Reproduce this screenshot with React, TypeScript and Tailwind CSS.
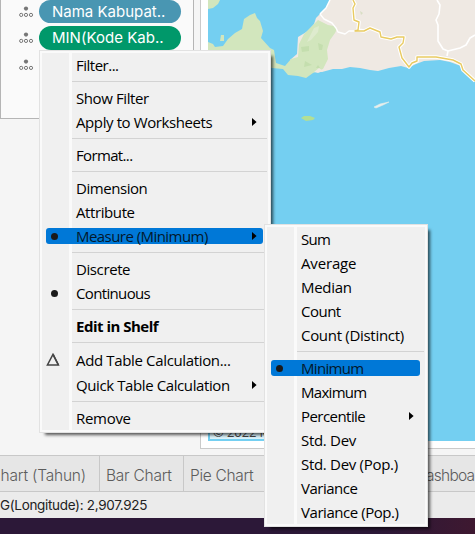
import React from "react";

type Entry = {
  label?: string;
  track?: string;
  bold?: boolean;
  dot?: boolean;
  delta?: boolean;
  arrow?: boolean;
  active?: boolean;
  tall?: boolean;
};

const fieldMenu: Entry[] = [
  { label: "Filter...", track: "tracking-[-0.5px]" },
  {},
  { label: "Show Filter", track: "tracking-[-0.4px]" },
  { label: "Apply to Worksheets", track: "tracking-[-0.4px]", arrow: true },
  {},
  { label: "Format...", track: "tracking-[-0.65px]" },
  {},
  { label: "Dimension", track: "tracking-[-0.45px]" },
  { label: "Attribute", track: "tracking-[-0.4px]" },
  { label: "Measure (Minimum)", track: "tracking-[-0.55px]", dot: true, arrow: true, active: true },
  {},
  { label: "Discrete", track: "tracking-[-0.4px]" },
  { label: "Continuous", track: "tracking-[-0.65px]", dot: true },
  {},
  { label: "Edit in Shelf", track: "tracking-[-0.5px]", bold: true },
  {},
  { label: "Add Table Calculation...", track: "tracking-[-0.35px]", delta: true, tall: true },
  { label: "Quick Table Calculation", track: "tracking-[-0.4px]", arrow: true, tall: true },
  {},
  { label: "Remove" },
];

const measureMenu: Entry[] = [
  { label: "Sum", track: "tracking-[-0.7px]" },
  { label: "Average", track: "tracking-[-0.15px]" },
  { label: "Median" },
  { label: "Count", track: "tracking-[-0.5px]" },
  { label: "Count (Distinct)" },
  {},
  { label: "Minimum", track: "tracking-[-0.7px]", dot: true, active: true },
  { label: "Maximum", track: "tracking-[-0.7px]" },
  { label: "Percentile", track: "tracking-[-0.55px]", arrow: true },
  { label: "Std. Dev" },
  { label: "Std. Dev (Pop.)" },
  { label: "Variance", track: "tracking-[-0.5px]" },
  { label: "Variance (Pop.)", track: "tracking-[-0.45px]" },
];

function Row({ item }: { item: Entry }) {
  if (!item.label) {
    return (
      <div className="flex h-[9px] items-start pt-[3px] pl-[30px] pr-[1px]">
        <div className="h-px w-full bg-[#d3d3d3]" />
      </div>
    );
  }
  return (
    <div className={`relative flex items-center ${item.tall ? "h-[25px]" : "h-6"}`}>
      {item.active && (
        <div className="absolute left-1 right-[5px] top-[3px] h-4 rounded-[3px] bg-[#0078d7]" />
      )}
      <div className="relative flex w-[34px] shrink-0 items-center pb-[2px]">
        {item.dot && <span className="ml-[8.5px] size-[7px] rounded-full bg-[#1a1a1a]" />}
        {item.delta && (
          <svg className="ml-[4px]" width="14" height="13" viewBox="0 0 14 13">
            <path d="M7 1.3 L12.4 12 H1.4 Z" fill="none" stroke="#444" strokeWidth="1.5" />
            <path d="M7.2 1.6 L12.4 12" stroke="#444" strokeWidth="1.6" />
          </svg>
        )}
      </div>
      <span
        className={`relative whitespace-nowrap pb-[2px] text-[15px] leading-[22px] ${
          item.track ?? "tracking-[-0.3px]"
        } ${item.bold ? "font-bold" : "font-normal"} ${item.active ? "text-[#03182c]" : "text-black"}`}
      >
        {item.label}
      </span>
      {item.arrow && (
        <svg className="relative mb-[2px] ml-auto mr-[11px]" width="5" height="8" viewBox="0 0 5 8">
          <path d="M0 0 L4.6 4 L0 8 Z" fill="#000" />
        </svg>
      )}
    </div>
  );
}

function Menu({ items, place }: { items: Entry[]; place: string }) {
  return (
    <div
      className={`absolute border border-[#e2e2e2] bg-[#fafafa] p-[2px] shadow-[4px_4px_3px_-2px_rgba(0,0,0,0.65)] ${place}`}
    >
      <div className="relative h-full bg-[#f0f0f0] pt-px">
        <div className="absolute inset-y-0 left-[27px] w-[3px] bg-[#fafafa]" />
        {items.map((item, i) => (
          <Row key={i} item={item} />
        ))}
      </div>
    </div>
  );
}

function DetailIcon() {
  return (
    <svg width="16" height="12" viewBox="0 0 16 12" className="shrink-0">
      <circle cx="8" cy="2.6" r="2.1" fill="#777" />
      <g fill="none" stroke="#777" strokeWidth="1">
        <circle cx="3.2" cy="8.9" r="1.6" />
        <circle cx="8" cy="8.9" r="1.6" />
        <circle cx="13" cy="8.9" r="1.6" />
      </g>
    </svg>
  );
}

function MapView() {
  return (
    <svg width="267" height="441" viewBox="208 0 267 441" className="block shrink-0">
      <rect x="208" width="267" height="441" fill="#74cff1" />
      <path
        d="M330 0 L326 8 L320 14 L316 18 L314 24 L308 31 L298 37 L297 54 L290 60 L305 73 L315 71 L322 72 L333 69 L342 69 L350 67 L360 68 L370 70 L378 71 L389 68 L401 66 L408 68 L416 64 L424 61 L440 60 L450 62 L461 66 L468 75 L475 82 V0 Z"
        fill="#efe9e3"
      />
      <path
        d="M208 42 L213 44 L215 47 L223 46 L228 39 L235 33 L242 29 L244 19 L250 15 L255 13 L257 18 L260 21 L263 31 L261 38 L270 48 L274 50 L276 63 L285 66 L291 59 L298 57 L299 44 L304 34 L312 26 L318 20 L328 25 L334 26 L337 29 L335 33 L330 40 L327 50 L328 59 L323 69 L313 73 L306 78 L298 76 L288 75 L283 69 L272 68 L208 52 Z"
        fill="#d2e6bd"
      />
      <path d="M208 0 H220 L218 4 L213 8 L208 9 Z M221 35 H224 V41 H220 Z" fill="#d2e6bd" />
      <path d="M307 42 L314 28 L319 26 L318 32 L311 40 Z" fill="#deebce" />
      <path d="M301 47 L309 46 V51 L302 52 Z M318 43 L323 45 L322 50 H319 Z M305 61 L312 65 L304 67 Z M316 68 L318 65 L320 68 Z" fill="#c4deae" />
      <path d="M360 11 L363 13 L361 15 Z" fill="#d8dec4" />
      <path d="M314 72 L319 68 L323 71 L318 73 Z" fill="#efe9e3" />
      <g fill="none" stroke="#fff" strokeLinejoin="round">
        <path d="M330 0 L326 8 L320 14" strokeWidth="1.5" />
        <path d="M320 14 L324 19 L332 23 L336 28 L338 32 L345 34 L349 31 L355 31" strokeWidth="1.4" />
        <path d="M437 0 L440 5 L439 14 L436 20 L438 25 V41 L443 49 L448 51 L460 48 L466 45 L470 38 L475 35 M448 51 L447 56" strokeWidth="1.6" />
        <path d="M353 0 L355 4 L353 8 L354 20 L359 22 L358 30 L364 31 L370 28 L380 32 L381 37 L391 39 L397 37 L404 37 L403 43 L399 47 L402 58 L409 67 L412 63 L417 61 V57 H436 L453 60 L461 64 L463 70 L475 81" strokeWidth="3.6" />
      </g>
      <path
        d="M353 0 L355 4 L353 8 L354 20 L359 22 L358 30 L355 31 L364 31 L370 28 L380 32 L381 37 L391 39 L397 37 L404 37 L403 43 L399 47 L402 58 L409 67 L412 63 L417 61 V57 H436 L453 60 L461 64 L463 70 L475 81"
        fill="none"
        stroke="#e9cb63"
        strokeWidth="1.4"
        strokeLinejoin="round"
      />
      <path d="M301 118 L304 116 H310 L315 118 L313 120 L306 121 Z" fill="#b2df95" />
      <path d="M374 107 L380 104 L389 102 L383 105 L376 108 Z" fill="#e8eeeb" stroke="#e8eeeb" strokeWidth=".6" />
    </svg>
  );
}

const tabs =
  "flex h-full shrink-0 items-center whitespace-nowrap border-r border-[#c8c8c8] pt-[4px] text-[15.5px] text-[#5c5c5c]";

export default function App() {
  return (
    <div className="relative flex h-[534px] w-[475px] flex-col overflow-hidden bg-[#f5f5f5] font-['Open_Sans','Noto_Sans',sans-serif]">
      <div className="flex h-[455px] shrink-0">
        <div className="h-[119px] w-[194px] shrink-0 border-b border-l border-r border-[#b5b5b5] bg-[#fafafa] font-['Inter',sans-serif]">
          <div className="flex h-[23px] items-center gap-[5px] pl-[17px]">
            <DetailIcon />
            <div className="flex h-[23px] w-[142px] items-center rounded-full bg-[#4996b2] pl-[13px] pt-px text-[15px] tracking-[0px] text-white">
              Nama Kabupat..
            </div>
          </div>
          <div className="mt-[3px] flex h-6 items-center gap-[5px] pl-[17px]">
            <DetailIcon />
            <div className="flex h-6 w-[142px] items-center rounded-full bg-[#00986a] pl-[13px] pt-px text-[15px] tracking-[0.02px] text-white">
              MIN(Kode Kab..
            </div>
          </div>
          <div className="mt-[3px] flex h-6 items-center pl-[17px]">
            <DetailIcon />
          </div>
        </div>
        <div className="ml-[6px] flex h-[449px] w-[275px] shrink-0 border-b border-l border-[#cacaca] bg-white pl-[7px]">
          <div className="relative h-[441px] w-[267px]">
            <MapView />
            <div className="absolute bottom-[2px] left-[2px] flex h-[17px] w-[110px] items-center whitespace-nowrap bg-[#dcf3fb] pl-[3px] text-[13px] leading-none tracking-[-0.1px] text-[#444]">
              <span className="pt-[3px]">© 2022 Mapbox</span>
            </div>
          </div>
        </div>
      </div>
      <div className="flex h-[37px] shrink-0 border-y border-[#c8c8c8] bg-[#e6e6e6] font-['Inter',sans-serif] font-light">
        <div className={`${tabs} w-[100px] justify-end pr-[13px] tracking-[-0.2px]`}>hart (Tahun)</div>
        <div className={`${tabs} w-[84px] pl-[6px] tracking-[-0.25px]`}>Bar Chart</div>
        <div className={`${tabs} w-[82px] pl-[6px] tracking-[-0.3px]`}>Pie Chart</div>
        <div className={`${tabs} w-[209px] border-r-0 pl-[160px] tracking-[-0.75px]`}>ashboa</div>
      </div>
      <div className="flex h-[26px] shrink-0 items-center bg-[#ebebeb] pt-px font-['Inter',sans-serif] text-[13.5px] tracking-[-0.32px] text-[#222]">
        <span className="whitespace-nowrap">G(Longitude): 2,907.925</span>
      </div>
      <div className="h-4 shrink-0 bg-linear-to-r from-[#2c1838] from-80% to-[#3e1830]" />
      <Menu items={fieldMenu} place="left-[39px] top-[50px] h-[383px] w-[232px]" />
      <Menu items={measureMenu} place="left-[264px] top-[224px] h-[303px] w-[164px]" />
    </div>
  );
}
